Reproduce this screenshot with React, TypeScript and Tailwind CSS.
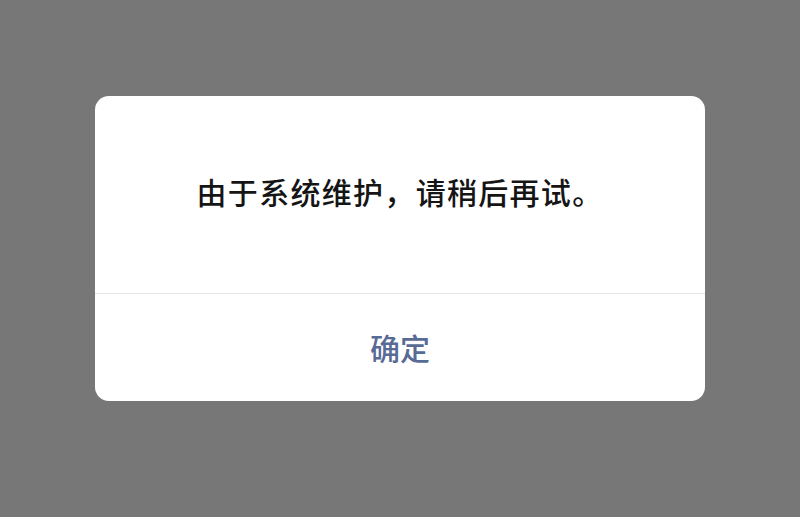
export default function App() {
  return (
    <div
      className="w-[800px] h-[517px] bg-[#777777] flex items-start justify-center pt-[96px]"
      style={{ fontFamily: '"Noto Sans CJK SC", "Noto Sans", sans-serif' }}
    >
      <div className="w-[610px] bg-white rounded-[14px] overflow-hidden flex flex-col">
        <div className="h-[197px] flex items-center justify-center pb-[8px]">
          <p className="text-[30px] leading-none tracking-[1.3px] font-medium text-[#151515]">
            由于系统维护，请稍后再试。
          </p>
        </div>
        <div className="h-px bg-[#e6e6e6]" />
        <button className="h-[107px] flex items-center justify-center pb-[2px] text-[30px] leading-none font-medium text-[#576b95]">
          确定
        </button>
      </div>
    </div>
  );
}
